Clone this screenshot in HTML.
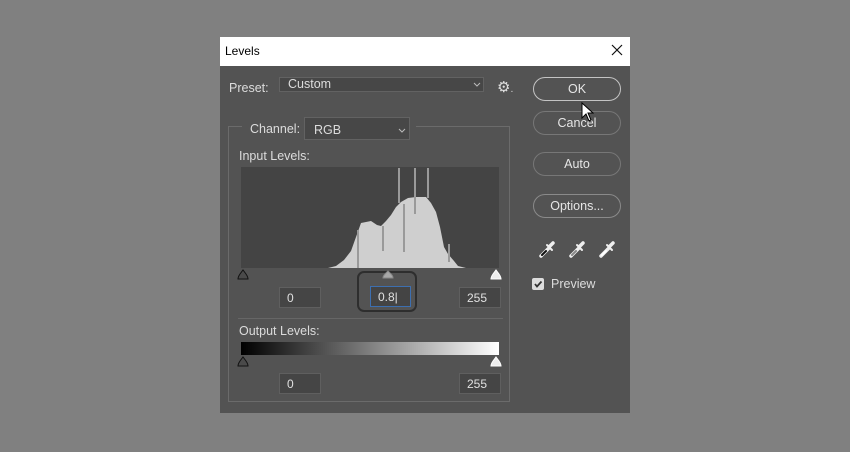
<!DOCTYPE html>
<html><head><style>
body{margin:0;width:850px;height:452px;background:#808080;position:relative;overflow:hidden;font-family:"Liberation Sans",sans-serif;font-size:12px}
.a{position:absolute}
.t{color:#dcdcdc}
.inp{position:absolute;background:#454545;border:1px solid #5f5f5f;color:#e0e0e0;box-sizing:border-box;padding:3px 0 0 7px;height:21px}
.btn{position:absolute;left:533px;width:88px;height:24px;box-sizing:border-box;border:1px solid #8a8a8a;border-radius:12px;color:#e6e6e6;text-align:center;line-height:23px;font-size:12.5px}
</style></head><body>
<div class="a" style="left:220px;top:37px;width:410px;height:376px;background:#535353"></div>
<div class="a" style="left:220px;top:37px;width:410px;height:29px;background:#fff"></div>
<div class="a" style="left:225px;top:44px;color:#000;font-size:12px">Levels</div>
<svg class="a" style="left:611px;top:44px" width="12" height="12"><path d="M1 1L11 11M11 1L1 11" stroke="#111" stroke-width="1.2"/></svg>

<div class="a t" style="left:229px;top:81px;font-size:12.5px">Preset:</div>
<div class="a" style="left:279px;top:77px;width:205px;height:15px;background:#474747;border:1px solid #626262;box-sizing:border-box"></div>
<div class="a t" style="left:288px;top:77px;font-size:12.5px">Custom</div>
<svg class="a" style="left:473px;top:82px" width="8" height="6"><path d="M1 1L4 4L7 1" stroke="#bbb" fill="none"/></svg>
<div class="a" style="left:497px;top:78px;color:#ddd;font-size:15px;font-family:'DejaVu Sans',sans-serif">⚙<span style="font-size:9px">.</span></div>

<div class="a" style="left:228px;top:126px;width:282px;height:276px;border:1px solid #6b6b6b;box-sizing:border-box"></div>
<div class="a" style="left:242px;top:118px;width:174px;height:20px;background:#535353"></div>
<div class="a t" style="left:250px;top:122px;font-size:12.5px">Channel:</div>
<div class="a" style="left:304px;top:117px;width:106px;height:23px;background:#474747;border:1px solid #626262;box-sizing:border-box"></div>
<div class="a t" style="left:314px;top:123px;font-size:12.5px">RGB</div>
<svg class="a" style="left:398px;top:128px" width="8" height="6"><path d="M1 1L4 4L7 1" stroke="#bbb" fill="none"/></svg>

<div class="a t" style="left:239px;top:149px;font-size:12.5px">Input Levels:</div>
<svg class="a" style="left:241px;top:167px" width="258" height="101">
<rect width="258" height="101" fill="#444"/>
<path d="M35 101L87 101L95 99L103 93L110 84L115 70L120 56L125 55L130 54L136 58L140 59L145 54L150 48L155 40L160 35L167 31L175 30L185 30L190 36L195 45L199 60L203 80L207 87L213 94L217 99L225 101Z" fill="#cfcfcf"/>
<path d="M117 63V101M142 59V84M163 37V85M208 77V95" stroke="#9a9a9a" stroke-width="2"/>
<path d="M158 1V36M174 1V47M187 1V31" stroke="#9a9a9a" stroke-width="2"/>
</svg>
<div class="a" style="left:357px;top:271px;width:60px;height:41px;border:2px solid #2e2e2e;border-radius:7px;box-sizing:border-box"></div>
<svg class="a" style="left:236px;top:266px" width="268" height="16">
<path d="M2 13Q2 11 4 8L7 4L10 8Q12 11 12 13Z" fill="#4a4a4a" stroke="#111"/>
<path d="M147 12Q147 10 149 8L152 5L155 8Q157 10 157 12Z" fill="#a8a8a8" stroke="#888"/>
<path d="M255 13Q255 11 257 8L260 4L263 8Q265 11 265 13Z" fill="#eee" stroke="#fff"/>
</svg>
<div class="inp" style="left:279px;top:287px;width:42px">0</div>
<div class="inp" style="left:370px;top:286px;width:41px;border:1px solid #3d6fb0;background:#444">0.8|</div>
<div class="inp" style="left:459px;top:287px;width:42px">255</div>
<div class="a" style="left:238px;top:318px;width:265px;height:1px;background:#666"></div>

<div class="a t" style="left:239px;top:324px;font-size:12.5px">Output Levels:</div>
<div class="a" style="left:241px;top:342px;width:258px;height:13px;background:linear-gradient(to right,#000,#fff)"></div>
<svg class="a" style="left:236px;top:353px" width="268" height="16">
<path d="M2 13Q2 11 4 8L7 4L10 8Q12 11 12 13Z" fill="#4a4a4a" stroke="#111"/>
<path d="M255 13Q255 11 257 8L260 4L263 8Q265 11 265 13Z" fill="#eee" stroke="#fff"/>
</svg>
<div class="inp" style="left:279px;top:373px;width:42px">0</div>
<div class="inp" style="left:459px;top:373px;width:42px">255</div>

<div class="btn" style="top:77px;border-color:#c4c4c4">OK</div>
<div class="btn" style="top:111px;border-color:#777">Cancel</div>
<div class="btn" style="top:152px;border-color:#777">Auto</div>
<div class="btn" style="top:194px;border-color:#8a8a8a">Options...</div>

<svg class="a" style="left:538px;top:239px" width="80" height="20">
<g fill="none" stroke-linecap="round">
<path d="M3 17L11 9" stroke="#eee" stroke-width="3.5"/><path d="M4 16L8 12" stroke="#111" stroke-width="2"/>
<path d="M9 6L14 11" stroke="#eee" stroke-width="2"/><path d="M12 7L15 4" stroke="#eee" stroke-width="3.5"/>
<path d="M33 17L41 9" stroke="#eee" stroke-width="3.5"/><path d="M34 16L38 12" stroke="#888" stroke-width="2"/>
<path d="M39 6L44 11" stroke="#eee" stroke-width="2"/><path d="M42 7L45 4" stroke="#eee" stroke-width="3.5"/>
<path d="M63 17L71 9" stroke="#eee" stroke-width="3.5"/><path d="M64 16L68 12" stroke="#fff" stroke-width="2"/>
<path d="M69 6L74 11" stroke="#eee" stroke-width="2"/><path d="M72 7L75 4" stroke="#eee" stroke-width="3.5"/>
</g></svg>
<div class="a" style="left:532px;top:278px;width:12px;height:12px;background:#ddd;border-radius:2px"></div>
<svg class="a" style="left:532px;top:278px" width="12" height="12"><path d="M3 6L5 8.5L9.5 3.5" stroke="#333" stroke-width="1.8" fill="none"/></svg>
<div class="a t" style="left:551px;top:277px;font-size:12.5px">Preview</div>

<svg class="a" style="left:581px;top:102px" width="13" height="20"><path d="M1 1V16L5 12L8 19L10 18L7 11H12Z" fill="#fff" stroke="#000"/></svg>
</body></html>
